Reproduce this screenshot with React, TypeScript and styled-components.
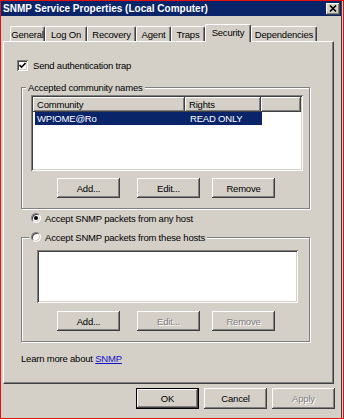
import React from 'react';
import styled, { createGlobalStyle, css } from 'styled-components';

const FACE = '#d4d0c8';
const SHADOW = '#808080';
const DARK = '#404040';
const NAVY = '#0a246a';

const GlobalStyle = createGlobalStyle`
  html, body {
    margin: 0;
    padding: 0;
    background: ${FACE};
  }
  body {
    font-family: "Liberation Sans", Arial, sans-serif;
    font-size: 9.5px;
    letter-spacing: -0.2px;
    color: #000;
  }
`;

// classic 3D edges
const raised = css`
  box-shadow: inset -1px -1px ${DARK}, inset 1px 1px #fff, inset -2px -2px ${SHADOW};
`;
const sunken = css`
  box-shadow: inset 1px 1px ${SHADOW}, inset -1px -1px #fff, inset 2px 2px ${DARK},
    inset -2px -2px ${FACE};
`;

const Frame = styled.div`
  width: 344px;
  height: 419px;
  box-sizing: border-box;
  border: 1px solid #e8100c;
  padding-right: 1px;
  background: ${FACE};
  display: flex;
`;

const Window = styled.div`
  flex: 1;
  display: flex;
  flex-direction: column;
  border-right: 1px solid ${DARK};
`;

const TitleBar = styled.div`
  height: 15px;
  background: ${NAVY};
  color: #fff;
  display: flex;
  align-items: center;
  justify-content: space-between;
  padding: 0 1px 0 2px;
`;

const TitleText = styled.span`
  font-weight: bold;
  font-size: 10px;
  letter-spacing: 0;
`;

const CloseButton = styled.div`
  width: 14px;
  height: 12px;
  box-sizing: border-box;
  background: ${FACE};
  ${raised};
  display: flex;
  align-items: center;
  justify-content: center;
`;

const TabStrip = styled.div`
  display: flex;
  align-items: flex-end;
  height: 17px;
  margin: 8px 0 0 9px;
  position: relative;
  z-index: 1;
`;

const Tab = styled.div<{ $w: number; $active?: boolean }>`
  width: ${p => p.$w}px;
  height: 15px;
  box-sizing: border-box;
  border: 1px solid #fff;
  border-bottom: none;
  border-right-color: ${DARK};
  border-radius: 2px 2px 0 0;
  box-shadow: inset -1px 0 ${SHADOW};
  background: ${FACE};
  display: flex;
  align-items: center;
  justify-content: center;
  white-space: nowrap;
  ${p =>
    p.$active &&
    css`
      height: 18px;
      margin-bottom: -1px;
      padding-bottom: 2px;
    `}
`;

const Panel = styled.div`
  margin-left: 2px;
  width: 331px;
  height: 343px;
  box-sizing: border-box;
  border: 1px solid #fff;
  border-right-color: ${DARK};
  border-bottom-color: ${DARK};
  box-shadow: inset -1px -1px ${SHADOW};
  padding-left: 13px;
  display: flex;
  flex-direction: column;
  align-items: flex-start;
`;

const OptionRow = styled.div<{ $mt: number; $ml: number }>`
  display: flex;
  align-items: center;
  gap: 4px;
  height: 12px;
  margin: ${p => p.$mt}px 0 0 ${p => p.$ml}px;
  white-space: nowrap;
`;

const CheckBox = styled.span`
  width: 11px;
  height: 11px;
  box-sizing: border-box;
  background: #fff;
  ${sunken};
  display: flex;
  align-items: center;
  justify-content: center;
  margin-right: 1px;
`;

const Radio = styled.span<{ $checked?: boolean }>`
  width: 10px;
  height: 10px;
  box-sizing: border-box;
  border-radius: 50%;
  border: 1px solid;
  border-color: ${SHADOW} #fff #fff ${SHADOW};
  background: #fff;
  box-shadow: inset 1px 1px ${DARK}, inset -1px -1px ${FACE};
  display: flex;
  align-items: center;
  justify-content: center;

  &::after {
    content: '';
    width: 4px;
    height: 4px;
    border-radius: 50%;
    background: ${p => (p.$checked ? '#000' : 'transparent')};
  }
`;

const Group = styled.div<{ $mt: number; $pb: number }>`
  margin: ${p => p.$mt}px 0 0 4px;
  width: 289px;
  box-sizing: border-box;
  border: 1px solid ${SHADOW};
  box-shadow: inset 1px 1px #fff, 1px 1px #fff;
  padding-bottom: ${p => p.$pb}px;
  display: flex;
  flex-direction: column;
  align-items: flex-start;
`;

const Caption = styled.div<{ $ml: number }>`
  margin: -7px 0 0 ${p => p.$ml}px;
  padding: 0 2px;
  height: 12px;
  background: ${FACE};
  display: flex;
  align-items: center;
  gap: 4px;
  white-space: nowrap;
`;

const ListBox = styled.div<{ $w: number; $h: number; $mt: number; $ml: number }>`
  width: ${p => p.$w}px;
  height: ${p => p.$h}px;
  margin: ${p => p.$mt}px 0 0 ${p => p.$ml}px;
  box-sizing: border-box;
  padding: 2px;
  background: #fff;
  ${sunken};
  display: flex;
  flex-direction: column;
`;

const HeaderRow = styled.div`
  display: flex;
  height: 15px;
  flex-shrink: 0;
`;

const HeaderCell = styled.div<{ $w?: number }>`
  ${p => (p.$w ? `width: ${p.$w}px;` : 'flex: 1;')}
  box-sizing: border-box;
  background: ${FACE};
  ${raised};
  padding-left: 4px;
  display: flex;
  align-items: center;
`;

const SelectedRow = styled.div`
  display: flex;
  margin-left: 2px;
  width: 227px;
  height: 13px;
  background: ${NAVY};
  color: #fff;
`;

const RowCell = styled.div<{ $w: number }>`
  width: ${p => p.$w}px;
  padding-left: 2px;
  box-sizing: border-box;
  display: flex;
  align-items: center;
`;

const ButtonRow = styled.div<{ $mt: number }>`
  display: flex;
  margin: ${p => p.$mt}px 0 0 35px;
`;

const Button = styled.button<{ $ml?: number; $h?: number; $default?: boolean }>`
  width: 63px;
  height: ${p => p.$h ?? 20}px;
  margin-left: ${p => p.$ml ?? 0}px;
  box-sizing: border-box;
  padding: 0;
  border: ${p => (p.$default ? '1px solid #000' : 'none')};
  background: ${FACE};
  ${raised};
  font: inherit;
  letter-spacing: inherit;
  color: #000;

  &:disabled {
    color: ${SHADOW};
    text-shadow: 1px 1px #fff;
  }
`;

const LearnMore = styled.div`
  margin: 10px 0 0 4px;
  height: 12px;
  display: flex;
  align-items: center;
  white-space: pre;
`;

const Link = styled.a`
  color: #1010c8;
  text-decoration: underline;
`;

const Footer = styled.div`
  display: flex;
  justify-content: flex-end;
  gap: 5px;
  margin-top: 4px;
  padding-right: 6px;
`;

const tabs: [string, number][] = [
  ['General', 35],
  ['Log On', 42],
  ['Recovery', 49],
  ['Agent', 35],
  ['Traps', 34],
  ['Security', 46],
  ['Dependencies', 66],
];

export default function App() {
  return (
    <>
      <GlobalStyle />
      <Frame>
        <Window>
          <TitleBar>
            <TitleText>SNMP Service Properties (Local Computer)</TitleText>
            <CloseButton>
              <svg width="8" height="7" viewBox="0 0 8 7">
                <path d="M1 0.5 L7 6.5 M7 0.5 L1 6.5" stroke="#000" strokeWidth="1.6" />
              </svg>
            </CloseButton>
          </TitleBar>

          <TabStrip>
            {tabs.map(([label, w]) => (
              <Tab key={label} $w={w} $active={label === 'Security'}>
                {label}
              </Tab>
            ))}
          </TabStrip>

          <Panel>
            <OptionRow $mt={17} $ml={0}>
              <CheckBox>
                <svg width="7" height="7" viewBox="0 0 7 7">
                  <path d="M0.5 3 L2.5 5.2 L6.5 1" stroke="#000" strokeWidth="1.6" fill="none" />
                </svg>
              </CheckBox>
              Send authentication trap
            </OptionRow>

            <Group $mt={16} $pb={10}>
              <Caption $ml={4}>Accepted community names</Caption>
              <ListBox $w={272} $h={76} $mt={2} $ml={9}>
                <HeaderRow>
                  <HeaderCell $w={152}>Community</HeaderCell>
                  <HeaderCell $w={76}>Rights</HeaderCell>
                  <HeaderCell />
                </HeaderRow>
                <SelectedRow>
                  <RowCell $w={153}>WP!OME@Ro</RowCell>
                  <RowCell $w={74}>READ ONLY</RowCell>
                </SelectedRow>
              </ListBox>
              <ButtonRow $mt={7}>
                <Button>Add...</Button>
                <Button $ml={17}>Edit...</Button>
                <Button $ml={12}>Remove</Button>
              </ButtonRow>
            </Group>

            <OptionRow $mt={3} $ml={14}>
              <Radio $checked />
              Accept SNMP packets from any host
            </OptionRow>

            <Group $mt={13} $pb={10}>
              <Caption $ml={7}>
                <Radio />
                Accept SNMP packets from these hosts
              </Caption>
              <ListBox $w={261} $h={53} $mt={7} $ml={15} />
              <ButtonRow $mt={8}>
                <Button>Add...</Button>
                <Button $ml={17} disabled>
                  Edit...
                </Button>
                <Button $ml={12} disabled>
                  Remove
                </Button>
              </ButtonRow>
            </Group>

            <LearnMore>
              Learn more about <Link>SNMP</Link>
            </LearnMore>
          </Panel>

          <Footer>
            <Button $h={21} $default>
              OK
            </Button>
            <Button $h={21}>Cancel</Button>
            <Button $h={21} disabled>
              Apply
            </Button>
          </Footer>
        </Window>
      </Frame>
    </>
  );
}
